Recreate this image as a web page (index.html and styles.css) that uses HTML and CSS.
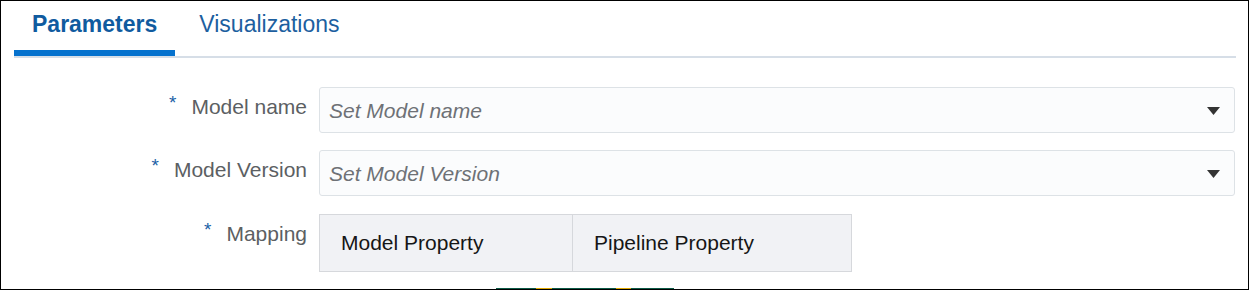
FILE: index.html
```html
<!DOCTYPE html>
<html>
<head>
<meta charset="utf-8">
<link rel="stylesheet" href="styles.css">
</head>
<body>
<div class="frame">
  <div class="tabs">
    <div class="tab active">Parameters</div>
    <div class="tab">Visualizations</div>
  </div>
  <div class="form">
    <div class="row">
      <div class="label"><span class="req">*</span>Model name</div>
      <div class="select">
        <span class="placeholder">Set Model name</span>
        <svg class="caret" width="13" height="8" viewBox="0 0 13 8"><polygon points="0,0 13,0 6.5,8" fill="#333"/></svg>
      </div>
    </div>
    <div class="row">
      <div class="label"><span class="req">*</span>Model Version</div>
      <div class="select">
        <span class="placeholder">Set Model Version</span>
        <svg class="caret" width="13" height="8" viewBox="0 0 13 8"><polygon points="0,0 13,0 6.5,8" fill="#333"/></svg>
      </div>
    </div>
    <div class="row last">
      <div class="label"><span class="req">*</span>Mapping</div>
      <table class="map">
        <tr>
          <th class="c1">Model Property</th>
          <th class="c2">Pipeline Property</th>
        </tr>
      </table>
    </div>
  </div>
  <div class="peek">
    <span class="g g1"></span><span class="y"></span><span class="g g2"></span><span class="y y2"></span><span class="g g3"></span>
  </div>
</div>
</body>
</html>
```
FILE: styles.css
```css
html, body {
  margin: 0;
  padding: 0;
  background: #fff;
}
.frame {
  width: 1249px;
  height: 290px;
  box-sizing: border-box;
  border: 1px solid #000;
  overflow: hidden;
  font-family: "Liberation Sans", Arial, sans-serif;
}
.tabs {
  display: flex;
  margin: 0 12px 0 13px;
  border-bottom: 2px solid #d6dee7;
}
.tab {
  font-size: 23px;
  line-height: 30px;
  padding: 8px 19px 11px 19px;
  border-bottom: 6px solid transparent;
  color: #1d5f9f;
  margin-right: 5px;
}
.tab.active {
  font-weight: bold;
  color: #105b9f;
  border-bottom-color: #0572ce;
  padding-left: 18px;
  padding-right: 18px;
}
.form {
  margin-top: 29px;
  display: flex;
  flex-direction: column;
}
.row {
  display: grid;
  grid-template-columns: 306px 916px;
  column-gap: 12px;
  margin-bottom: 17px;
  align-items: start;
}
.row:nth-child(2) {
  margin-bottom: 18px;
}
.row.last {
  margin-bottom: 16px;
}
.label {
  text-align: right;
  font-size: 21px;
  line-height: 24px;
  padding-top: 8px;
  color: #5c5f63;
}
.req {
  color: #1b5fa6;
  font-size: 19px;
  margin-right: 15px;
  position: relative;
  top: -5px;
}
.select {
  height: 46px;
  box-sizing: border-box;
  border: 1px solid #dde2e6;
  border-radius: 3px;
  background: #fbfcfd;
  display: flex;
  align-items: center;
  justify-content: space-between;
  padding: 1px 14px 0 9px;
}
.placeholder {
  font-style: italic;
  font-size: 21px;
  line-height: 24px;
  color: #6e7176;
}
.caret {
  display: block;
}
.map {
  border-collapse: collapse;
  height: 58px;
  justify-self: start;
  table-layout: fixed;
  width: 532px;
}
.map th {
  box-sizing: border-box;
  background: #f1f2f5;
  border: 1px solid #d6d8dc;
  font-weight: normal;
  font-size: 21px;
  color: #161616;
  text-align: left;
  vertical-align: middle;
  padding: 0 0 0 21px;
}
.map .c1 { width: 253px; }
.map .c2 { width: 279px; }
.peek {
  display: flex;
  margin-left: 495px;
  height: 10px;
}
.peek span { display: block; height: 10px; }
.g { background: #0b5a47; }
.y { background: #e1a800; width: 16px; }
.g1 { width: 40px; }
.g2 { width: 64px; }
.y2 { width: 15px; }
.g3 { width: 43px; }
```
